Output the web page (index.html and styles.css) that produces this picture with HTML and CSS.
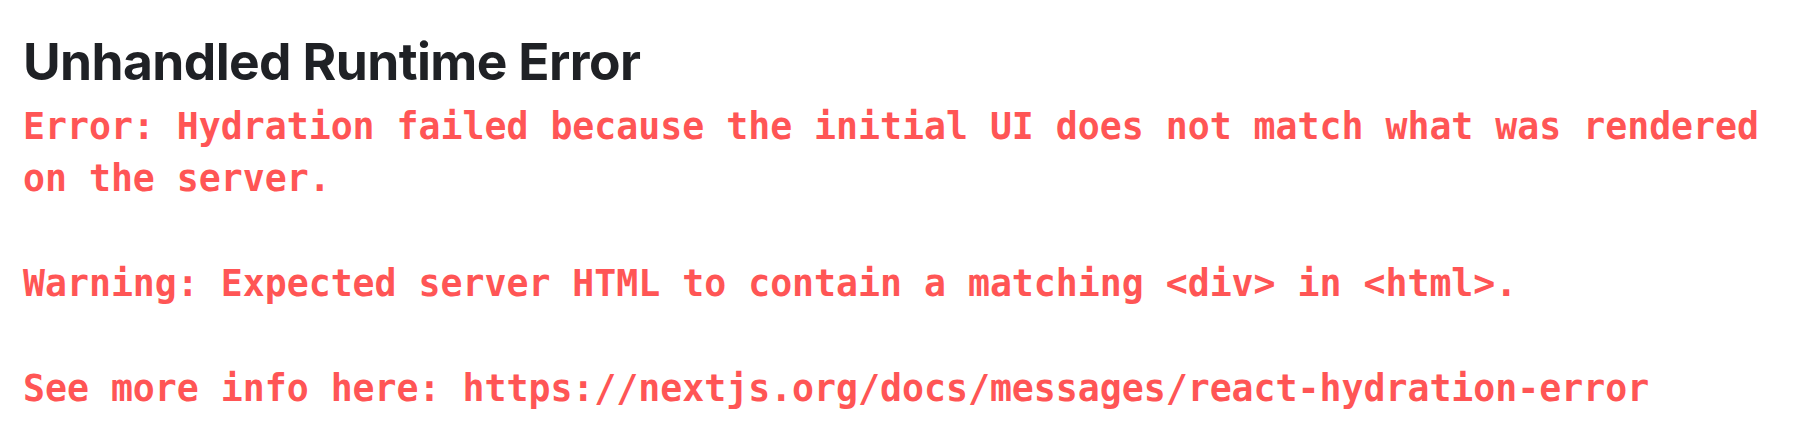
FILE: index.html
```html
<!DOCTYPE html>
<html>
<head>
<meta charset="utf-8">
<link rel="stylesheet" href="styles.css">
</head>
<body>
<div class="overlay">
<h1 class="title">Unhandled Runtime Error</h1>
<pre class="message">Error: Hydration failed because the initial UI does not match what was rendered on the server.

Warning: Expected server HTML to contain a matching &lt;div&gt; in &lt;html&gt;.

See more info here: https://nextjs.org/docs/messages/react-hydration-error</pre>
</div>
</body>
</html>
```
FILE: styles.css
```css
html, body {
  margin: 0;
  padding: 0;
  background: #ffffff;
}
.overlay {
  padding: 30px 0 0 23px;
  width: 1800px;
  box-sizing: border-box;
}
.title {
  margin: 0;
  font-family: Inter, "Liberation Sans", sans-serif;
  font-weight: 700;
  font-size: 51.5px;
  line-height: 62px;
  color: #1f2125;
  letter-spacing: -0.6px;
}
.message {
  margin: 9px 0 0 0;
  font-family: "DejaVu Sans Mono", "Liberation Mono", monospace;
  font-weight: 700;
  font-size: 36.5px;
  line-height: 52.4px;
  color: #ff5555;
  white-space: pre-wrap;
}
```
